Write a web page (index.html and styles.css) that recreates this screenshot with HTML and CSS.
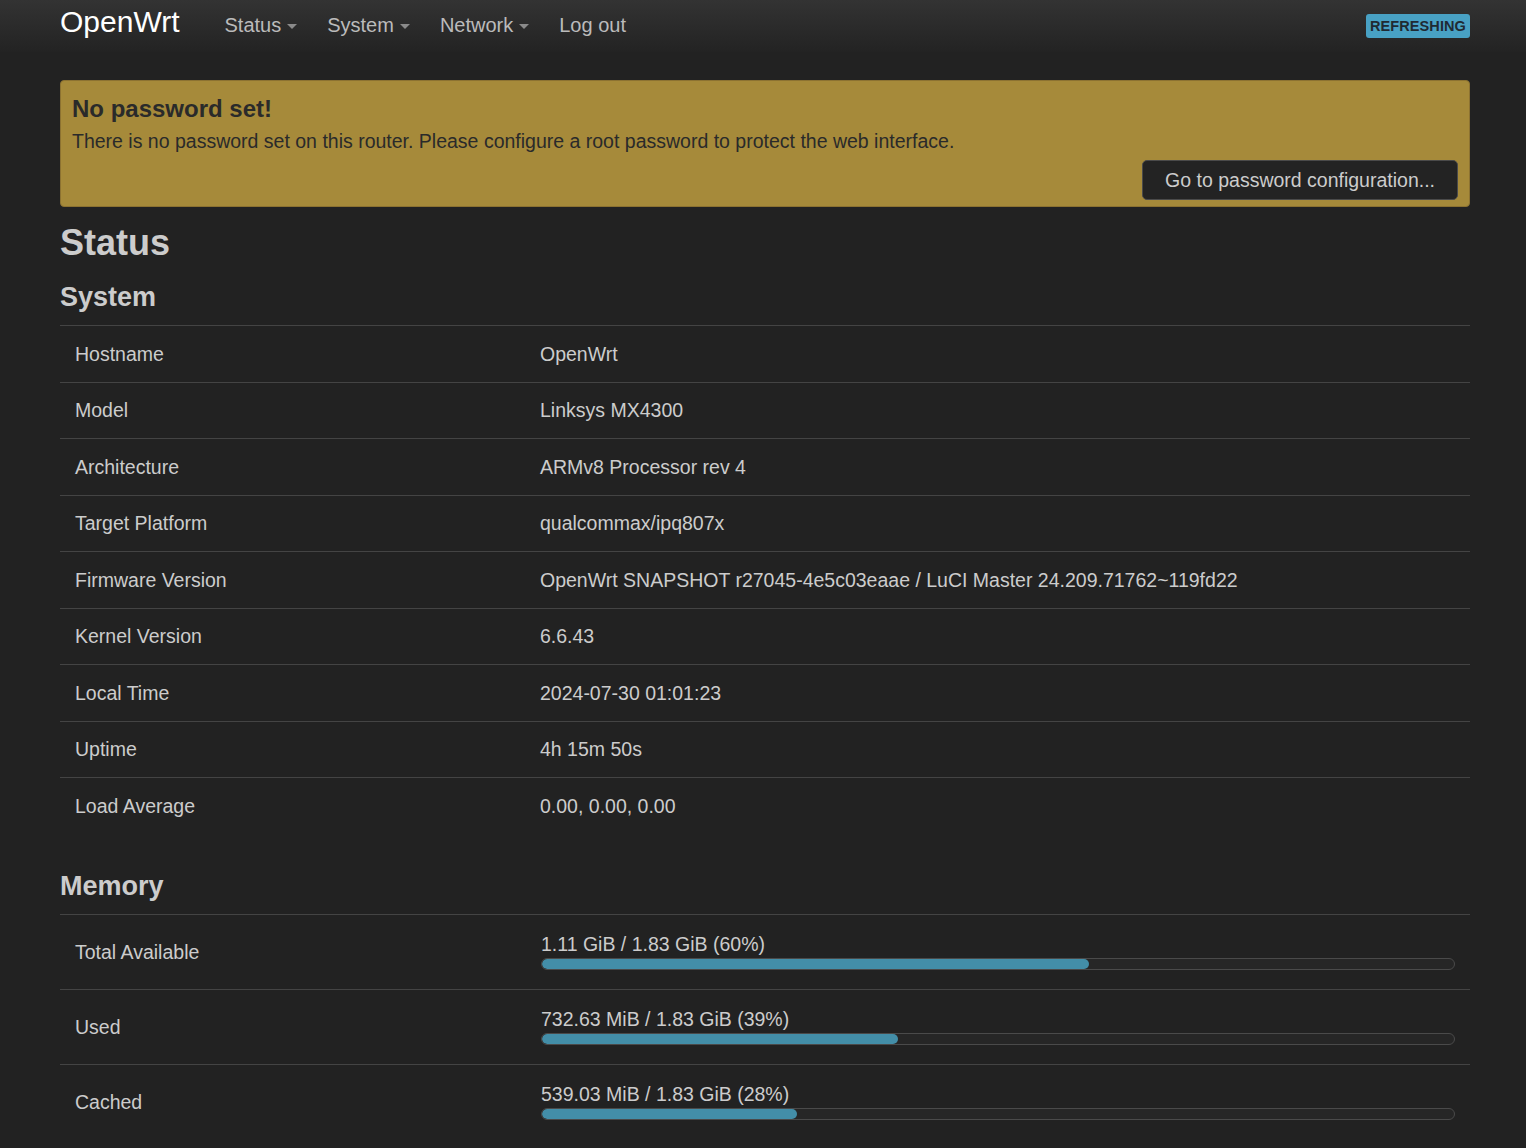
FILE: index.html
```html
<!DOCTYPE html>
<html lang="en">
<head>
<meta charset="utf-8">
<title>OpenWrt - Status</title>
<link rel="stylesheet" href="styles.css">
</head>
<body>
<header class="topbar">
  <div class="container topbar-inner">
    <a class="brand">OpenWrt</a>
    <nav class="nav">
      <a class="nav-item">Status<span class="caret"></span></a>
      <a class="nav-item">System<span class="caret"></span></a>
      <a class="nav-item">Network<span class="caret"></span></a>
      <a class="nav-item">Log out</a>
    </nav>
    <span class="badge">REFRESHING</span>
  </div>
</header>
<main class="container">
  <div class="alert">
    <h4 class="alert-title">No password set!</h4>
    <p class="alert-text">There is no password set on this router. Please configure a root password to protect the web interface.</p>
    <div class="alert-actions">
      <button class="btn">Go to password configuration...</button>
    </div>
  </div>

  <h2 class="page-title">Status</h2>

  <h3 class="section-title">System</h3>
  <div class="table">
    <div class="tr"><div class="td left">Hostname</div><div class="td">OpenWrt</div></div>
    <div class="tr"><div class="td left">Model</div><div class="td">Linksys MX4300</div></div>
    <div class="tr"><div class="td left">Architecture</div><div class="td">ARMv8 Processor rev 4</div></div>
    <div class="tr"><div class="td left">Target Platform</div><div class="td">qualcommax/ipq807x</div></div>
    <div class="tr"><div class="td left">Firmware Version</div><div class="td">OpenWrt SNAPSHOT r27045-4e5c03eaae / LuCI Master 24.209.71762~119fd22</div></div>
    <div class="tr"><div class="td left">Kernel Version</div><div class="td">6.6.43</div></div>
    <div class="tr"><div class="td left">Local Time</div><div class="td">2024-07-30 01:01:23</div></div>
    <div class="tr"><div class="td left">Uptime</div><div class="td">4h 15m 50s</div></div>
    <div class="tr"><div class="td left">Load Average</div><div class="td">0.00, 0.00, 0.00</div></div>
  </div>

  <h3 class="section-title memory-title">Memory</h3>
  <div class="table">
    <div class="tr mem-row">
      <div class="td left">Total Available</div>
      <div class="td mem-cell">
        <div class="mem-text">1.11 GiB / 1.83 GiB (60%)</div>
        <div class="bar"><div class="fill" style="width:60%"></div></div>
      </div>
    </div>
    <div class="tr mem-row">
      <div class="td left">Used</div>
      <div class="td mem-cell">
        <div class="mem-text">732.63 MiB / 1.83 GiB (39%)</div>
        <div class="bar"><div class="fill" style="width:39%"></div></div>
      </div>
    </div>
    <div class="tr mem-row">
      <div class="td left">Cached</div>
      <div class="td mem-cell">
        <div class="mem-text">539.03 MiB / 1.83 GiB (28%)</div>
        <div class="bar"><div class="fill" style="width:28%"></div></div>
      </div>
    </div>
  </div>
</main>
</body>
</html>
```

FILE: styles.css
```css
* { box-sizing: border-box; }

html, body {
  margin: 0;
  padding: 0;
  background: #222222;
  color: #cccccc;
  font-family: "Liberation Sans", Arial, sans-serif;
  font-size: 19.5px;
  overflow: hidden;
}

.container {
  width: 1410px;
  margin: 0 0 0 60px;
}

.topbar {
  height: 52px;
  background: linear-gradient(to bottom, #333333, #232323);
}

.topbar-inner {
  display: flex;
  align-items: center;
  height: 50px;
}

.brand {
  font-size: 30px;
  color: #ffffff;
  line-height: 1;
  margin-top: -6px;
  margin-right: 45px;
}

.nav {
  display: flex;
  align-items: center;
  gap: 30px;
  flex: 1;
}

.nav-item {
  color: #bbbbbb;
  font-size: 20px;
  display: flex;
  align-items: center;
}

.caret {
  display: inline-block;
  width: 0;
  height: 0;
  margin-left: 6px;
  margin-top: 2px;
  border-left: 5px solid transparent;
  border-right: 5px solid transparent;
  border-top: 5px solid #8a8a8a;
}

.badge {
  background: #48a1c4;
  color: #1f2a33;
  font-weight: bold;
  font-size: 14.5px;
  letter-spacing: 0.1px;
  padding: 3px 4px 3px;
  border-radius: 3px;
  line-height: 18px;
  margin-top: 2px;
}

.alert {
  margin-top: 28px;
  background: #a68a3a;
  border: 1px solid #8c7231;
  border-radius: 4px;
  padding: 11px 11px 6px;
  color: #2a2a2a;
}

.alert-title {
  margin: 0;
  font-size: 24px;
  font-weight: bold;
  line-height: 34px;
}

.alert-text {
  margin: 0;
  font-size: 19.5px;
  line-height: 30px;
}

.alert-actions {
  display: flex;
  justify-content: flex-end;
  margin-top: 4px;
}

.btn {
  font-family: "Liberation Sans", Arial, sans-serif;
  font-size: 19.5px;
  color: #cccccc;
  background: #232323;
  border: 1px solid #4a4a4a;
  border-radius: 5px;
  height: 40px;
  padding: 0 22px;
  line-height: 38px;
}

.page-title {
  margin: 16px 0 0;
  font-size: 36px;
  font-weight: bold;
  line-height: 40px;
  color: #cccccc;
}

.section-title {
  margin: 17px 0 11px;
  font-size: 27px;
  font-weight: bold;
  line-height: 34px;
  color: #cccccc;
}

.memory-title {
  margin-top: 35px;
}

.table {
  display: flex;
  flex-direction: column;
}

.tr {
  display: flex;
  border-top: 1px solid #444444;
}

.td {
  padding: 15.75px 15px;
  line-height: 24px;
  flex: 1;
}

.td.left {
  flex: 0 0 465px;
}

.mem-row {
  align-items: center;
}

.mem-cell {
  padding: 17px 15px 19px 16px;
}

.mem-text {
  line-height: 24px;
}

.bar {
  margin-top: 2px;
  height: 12px;
  border: 1px solid #4a4a4a;
  border-radius: 6px;
  background: #262626;
  overflow: hidden;
}

.fill {
  height: 100%;
  background: #438ea8;
  border-radius: 5px;
}
```
